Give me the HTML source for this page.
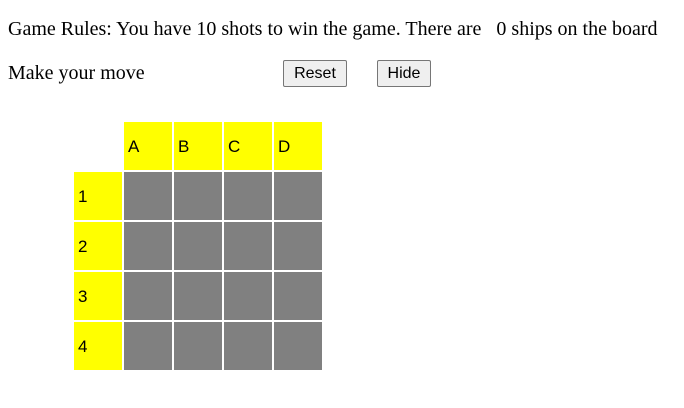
<!DOCTYPE html>
<html><head><meta charset="utf-8"><style>
body{margin:0;width:684px;height:408px;background:#fff;position:relative;overflow:hidden;font-family:"Liberation Serif",serif;}
.t{position:absolute;font-size:20px;color:#000;white-space:pre;line-height:22px;}
.b{position:absolute;box-sizing:border-box;background:#efefef;border:1px solid #767676;border-radius:2px;font-family:"Liberation Sans",sans-serif;font-size:16px;text-align:center;line-height:25px;color:#000;}
.c{position:absolute;width:48px;height:48px;font-family:"Liberation Sans",sans-serif;font-size:17px;line-height:50px;padding-left:4px;box-sizing:border-box;color:#000;}
.y{background:#ffff00;}
.g{background:#808080;}
</style></head><body>
<div class="t" style="left:8px;top:18px">Game Rules: You have 10 shots to win the game. There are   0 ships on the board</div>
<div class="t" style="left:8px;top:62px">Make your move</div>
<div class="b" style="left:283px;top:60px;width:64px;height:27px">Reset</div>
<div class="b" style="left:377px;top:60px;width:54px;height:27px">Hide</div>
<div class="c y" style="left:124px;top:122px">A</div>
<div class="c y" style="left:174px;top:122px">B</div>
<div class="c y" style="left:224px;top:122px">C</div>
<div class="c y" style="left:274px;top:122px">D</div>
<div class="c y" style="left:74px;top:172px">1</div>
<div class="c y" style="left:74px;top:222px">2</div>
<div class="c y" style="left:74px;top:272px">3</div>
<div class="c y" style="left:74px;top:322px">4</div>
<div class="c g" style="left:124px;top:172px"></div><div class="c g" style="left:174px;top:172px"></div><div class="c g" style="left:224px;top:172px"></div><div class="c g" style="left:274px;top:172px"></div>
<div class="c g" style="left:124px;top:222px"></div><div class="c g" style="left:174px;top:222px"></div><div class="c g" style="left:224px;top:222px"></div><div class="c g" style="left:274px;top:222px"></div>
<div class="c g" style="left:124px;top:272px"></div><div class="c g" style="left:174px;top:272px"></div><div class="c g" style="left:224px;top:272px"></div><div class="c g" style="left:274px;top:272px"></div>
<div class="c g" style="left:124px;top:322px"></div><div class="c g" style="left:174px;top:322px"></div><div class="c g" style="left:224px;top:322px"></div><div class="c g" style="left:274px;top:322px"></div>
</body></html>
